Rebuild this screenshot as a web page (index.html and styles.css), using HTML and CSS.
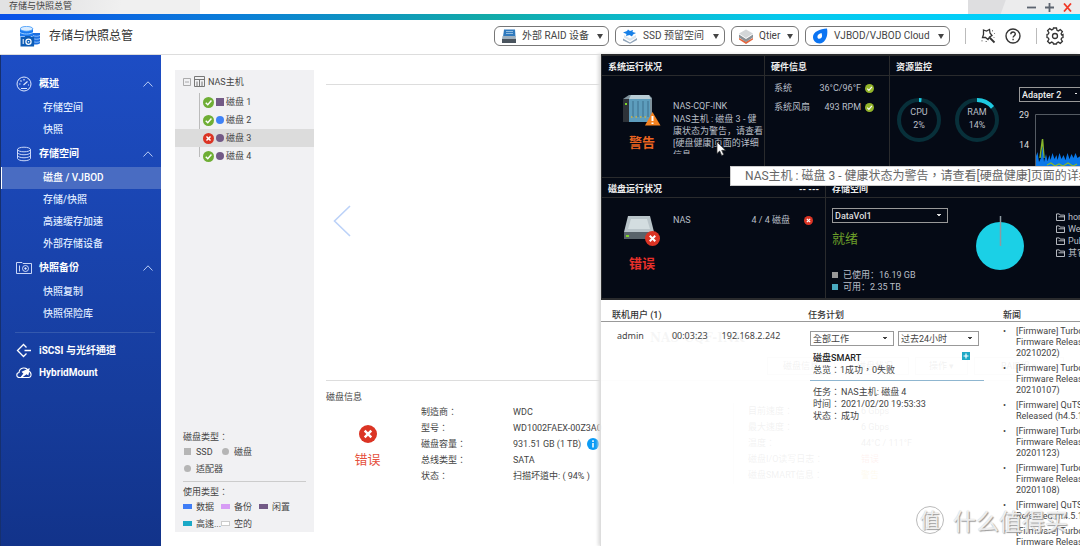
FILE: index.html
```html
<!DOCTYPE html>
<html lang="zh-Hant">
<head>
<meta charset="utf-8">
<title>存储与快照总管</title>
<link rel="stylesheet" href="styles.css">
</head>
<body>
<svg class="defs" aria-hidden="true">
  <symbol id="ok" viewBox="0 0 12 12"><circle cx="6" cy="6" r="6" fill="#6fae35"/><path d="M3 6.2 5.2 8.4 9.2 3.9" fill="none" stroke="#fff" stroke-width="1.6"/></symbol>
  <symbol id="fine" viewBox="0 0 12 12"><circle cx="6" cy="6" r="6" fill="#94b52a"/><path d="M3 6.2 5.2 8.4 9.2 3.9" fill="none" stroke="#fff" stroke-width="1.6"/></symbol>
  <symbol id="bad" viewBox="0 0 12 12"><circle cx="6" cy="6" r="6" fill="#db3424"/><path d="M3.8 3.8 8.2 8.2M8.2 3.8 3.8 8.2" stroke="#fff" stroke-width="1.6"/></symbol>
  <symbol id="up" viewBox="0 0 10 6"><path d="M.5 5.5 5 .8 9.5 5.5" fill="none" stroke="#b9cdf5" stroke-width="1"/></symbol>
  <symbol id="folder" viewBox="0 0 9 8"><path d="M.5 7.5V.9h2.8l.9 1.2h4.3v5.4zM2.5 3.8h6" fill="none" stroke="#c8ccd2" stroke-width=".9"/></symbol>
</svg>
<div class="window">
  <div class="titlebar">
    <span class="tab">存储与快照总管</span>
    <div class="winbtns">
      <button aria-label="最小化"><svg width="9" height="9" viewBox="0 0 9 9"><path d="M0 4.5h9" stroke="#5c6470" stroke-width="1.8"/></svg></button>
      <button aria-label="最大化"><svg width="9" height="9" viewBox="0 0 9 9"><path d="M0 4.5h9M4.5 0v9" stroke="#5c6470" stroke-width="1.8"/></svg></button>
      <button aria-label="关闭"><svg width="9" height="9" viewBox="0 0 9 9"><path d="M1 .5l7 8M8 .5l-7 8" stroke="#f03a28" stroke-width="1.8"/></svg></button>
    </div>
  </div>
  <div class="stripe"></div>
  <header class="header">
    <svg width="21" height="21" viewBox="0 0 21 21"><path d="M12.5 7v11c1 1 6.500.8 7.500-.8V7z" fill="#1d6fe0"/><path d="M13 9.500c2 1 5 1 7 0M13 12.500c2 1 5 1 7 0M13 15.500c2 1 5 1 7 0" stroke="#a9d4ff" fill="none" stroke-width=".8"/><path d="M0 2.500v8h13v-8z" fill="#1c7bf0"/><ellipse cx="6.500" cy="2.800" rx="6.300" ry="2.400" fill="#d9ecff" stroke="#3a95f7" stroke-width=".8"/><path d="M0 6.500c3 2 10 2 13 0" stroke="#9fd0ff" fill="none"/><path d="M.5 11h4l.8-1h5l.8 1h3v9.500H.500z" fill="#0d5cb6"/><circle cx="8.500" cy="15.700" r="2.600" fill="none" stroke="#fff" stroke-width="1.200"/><circle cx="8.500" cy="15.700" r=".8" fill="#fff"/><path d="M3.200 13v5" stroke="#fff"/></svg>
    <h1>存储与快照总管</h1>
    <div class="tools">
      <button class="pill p1"><svg width="16" height="15" viewBox="0 0 16 15"><path d="M3 .5h11L14.500 8H2z" fill="#2f79bd"/><path d="M5 2.500h7M5 4.500h7" stroke="#a9cdea" stroke-width=".8"/><path d="M1.500 7h13l.5 3H1z" fill="#9fb0be"/><path d="M1 10h14v4H1z" fill="#4a545e"/></svg><span>外部 RAID 设备</span><i></i></button>
      <button class="pill p2"><svg width="16" height="15" viewBox="0 0 16 15"><path d="M1 9.500 8 13.500 15 9v2l-7 3.800L1 11.500z" fill="#8fa3b8"/><path d="M2 6 8 9.500 14 6v2.500L8 12 2 8.500z" fill="#dbe5ee"/><path d="M1 3.500 5 2l1-1.500L8 2l3-1-.5 2L14 4l-3 1.500-1 2L7.500 6 4 7l.5-2z" fill="#1780e8"/></svg><span>SSD 预留空间</span><i></i></button>
      <button class="pill p3"><svg width="16" height="15" viewBox="0 0 16 15"><path d="M1 9 8 12.500 15 9v1.500L8 15 1 10.500z" fill="#e5673f"/><path d="M1 5.500 8 10l7-4.500v3L8 13 1 8.500z" fill="#8b9196"/><path d="M1 4.500 8 .5 15 4.500 8 9z" fill="#d3d6d8"/></svg><span>Qtier</span><i></i></button>
      <button class="pill p4"><svg width="16" height="16" viewBox="0 0 16 16"><path d="M15 .5C16.500 8 13 15.500 7.500 15.500 3.500 15.500 1 12.500 1 9 1 3.500 8 1 15 .5z" fill="#0b74f2"/><path d="M9.500 5c-3 .5-4.500 2.500-4 4.500s4 1.500 4.500-1C10.200 7.200 9.800 6 9.500 5z" fill="#fff"/></svg><span>VJBOD/VJBOD Cloud</span><i></i></button>
      <span class="vr"></span>
      <button class="ico" aria-label="查找"><svg width="16" height="16" viewBox="0 0 16 16" fill="none" stroke="#333" stroke-width="1.300"><path d="M3.500 2 6.500 3 9.500 1.500 10 5 12 7.500 9.500 9 8 11.500 5.500 9.500 2.500 9.500 3.500 6.500z"/><path d="m9.500 9.500 5 5" stroke-width="1.800"/><path d="M2 12v1.500M12.500 2v1.500M5.500 13.500h1.500M14 9v1M14 5.500h1" stroke="#888" stroke-width="1"/></svg></button>
      <button class="ico help" aria-label="帮助"><svg width="16" height="16" viewBox="0 0 16 16" fill="none" stroke="#333" stroke-width="1.400"><circle cx="8" cy="8" r="7"/><path d="M5.800 6.300c0-3 4.500-3 4.500-.3 0 1.700-2.200 1.700-2.200 3.500M8.100 10.800v1.400"/></svg></button>
      <span class="vr last"></span>
      <button class="ico" aria-label="设置"><svg width="18" height="18" viewBox="0 0 18 18" fill="none" stroke="#333" stroke-width="1.300"><path d="M7.500 1h3l.5 2.300 1.300.6 2-1.300 2.100 2.100-1.300 2 .6 1.300L17 7.500v3l-1.300.5-.6 1.300 1.300 2-2.100 2.100-2-1.300-1.300.6-.5 1.300h-3L7 15.700l-1.300-.6-2 1.300-2.100-2.100 1.300-2-.6-1.300L1 10.500v-3L2.300 7l.6-1.300-1.300-2 2.100-2.100 2 1.300L7 2.300z"/><circle cx="9" cy="9" r="2.500"/></svg></button>
    </div>
  </header>
  <div class="body">
    <nav class="side">
      <h2><svg width="16" height="16" viewBox="0 0 16 16" fill="none" stroke="#dce7ff"><circle cx="8" cy="8" r="7"/><path d="m7.500 9 4-3.500M3 8h1.500M4.500 4.500l1 1M8 3v1.500M12 9h1M5 12.500h6" stroke-width="1.200"/></svg>概述<svg class="up" width="10" height="6"><use href="#up"/></svg></h2>
      <a href="#">存储空间</a>
      <a href="#">快照</a>
      <h2><svg width="16" height="16" viewBox="0 0 16 16" fill="none" stroke="#dce7ff" stroke-width=".9"><ellipse cx="8" cy="3.500" rx="6.500" ry="2.300"/><path d="M1.500 3.500v9c1 3 12 3 13 0v-9M1.500 6.500c1 3 12 3 13 0M1.500 9.500c1 3 12 3 13 0"/></svg>存储空间<svg class="up" width="10" height="6"><use href="#up"/></svg></h2>
      <a href="#" class="on">磁盘 / VJBOD</a>
      <a href="#">存储/快照</a>
      <a href="#">高速缓存加速</a>
      <a href="#">外部存储设备</a>
      <h2><svg width="16" height="16" viewBox="0 0 16 16" fill="none" stroke="#dce7ff" stroke-width=".9"><path d="M.5 2.500H6l1 1h8.500v10H.500zM3.500 5.500v6"/><circle cx="9.500" cy="8.500" r="3"/><circle cx="9.500" cy="8.500" r=".8" fill="#fff"/></svg>快照备份<svg class="up" width="10" height="6"><use href="#up"/></svg></h2>
      <a href="#">快照复制</a>
      <a href="#">快照保险库</a>
      <hr>
      <a href="#" class="top"><svg width="16" height="16" viewBox="0 0 16 16" fill="none" stroke="#fff" stroke-width="1.300"><path d="M10.500 4.500 7.500 1.500 1.500 7.500l6 6 3-3M8.500 7.500h6.500"/></svg>iSCSI 与光纤通道</a>
      <a href="#" class="top"><svg width="16" height="16" viewBox="0 0 16 16" fill="none" stroke="#fff" stroke-width="1.100"><path d="M3.500 12.500C0 12.500 0 8 3 7.500 3.500 2 11 1.500 12 6c4 .5 4 6.500.5 6.500z"/><path d="m5 12.500 3-4-1.500-1.500L13 4l-1 5.500-1.500-1z" fill="#fff"/></svg>HybridMount</a>
    </nav>
    <main class="main">
      <section class="tree">
        <div class="root"><svg width="8" height="8" viewBox="0 0 8 8" fill="none" stroke="#999" stroke-width=".8"><path d="M.5.5h7v7h-7zM2 4h4"/></svg><svg width="11" height="11" viewBox="0 0 11 11" fill="none" stroke="#777"><path d="M.5.5h10v10H.500zM.5 3.500h10M3 5.500v5M5.500 3.500v7M8 5.500v5"/></svg>NAS主机</div>
        <ul>
          <li><svg width="11" height="11"><use href="#ok"/></svg><b class="sq"></b>磁盘 1</li>
          <li><svg width="11" height="11"><use href="#ok"/></svg><b class="blue"></b>磁盘 2</li>
          <li class="sel"><svg width="11" height="11"><use href="#bad"/></svg><b></b>磁盘 3</li>
          <li><svg width="11" height="11"><use href="#ok"/></svg><b></b>磁盘 4</li>
        </ul>
        <div class="legend">
          <p>磁盘类型：</p>
          <div class="keys"><span><i class="g"></i>SSD</span><span><i class="g r"></i>磁盘</span></div>
          <div class="keys"><span><i class="g r"></i>适配器</span></div>
          <hr>
          <p>使用类型：</p>
          <div class="keys"><span><i class="c1"></i>数据</span><span><i class="c2"></i>备份</span><span><i class="c3"></i>闲置</span></div>
          <div class="keys"><span><i class="c4"></i>高速...</span><span><i class="c5"></i>空的</span></div>
        </div>
      </section>
      <section class="detail">
        <div class="stage">
          <button class="prev" aria-label="上一个"><svg width="18" height="32" viewBox="0 0 18 32"><path d="M17 1 1.500 16 17 31" fill="none" stroke="#bcd2f8" stroke-width="1.600"/></svg></button>
          <div class="caption">NAS-CQF-INK</div>
          <div class="acts"><button>磁盘信息</button><button>磁盘状况</button><button class="narrow">操作 ▾</button><button class="wide">RAID组 ▾</button></div>
        </div>
        <h3>磁盘信息</h3>
        <div class="info">
          <div class="state"><svg width="18" height="18"><use href="#bad"/></svg>错误</div>
          <dl class="first">
            <dt>制造商：</dt><dd>WDC</dd>
            <dt>型号：</dt><dd>WD1002FAEX-00Z3A0</dd>
            <dt>磁盘容量：</dt><dd>931.51 GB (1 TB)<svg width="12" height="12" viewBox="0 0 12 12"><circle cx="6" cy="6" r="6" fill="#0a9bf5"/><path d="M6 2.300v1.700M6 5v4.500" stroke="#fff" stroke-width="1.500"/></svg></dd>
            <dt>总线类型：</dt><dd>SATA</dd>
            <dt>状态：</dt><dd>扫描坏道中: ( 94% )</dd>
          </dl>
          <dl class="second">
            <dt>目前速度：</dt><dd>6 Gbps</dd>
            <dt>最大速度：</dt><dd>6 Gbps</dd>
            <dt>温度：</dt><dd>44°C / 111°F</dd>
            <dt>磁盘I/O读写日志：</dt><dd class="red">错误</dd>
            <dt>磁盘SMART信息：</dt><dd class="amber">警告</dd>
          </dl>
        </div>
      </section>

      <aside class="dash">
        <div class="dark" lang="zh-Hans">
          <div class="row row1">
            <section class="cell">
              <h4>系统运行状况</h4>
              <div class="status">
                <div class="pic warn"><svg width="38" height="34" viewBox="0 0 38 34"><path d="M0 5 6 1h20l3 3v22l-3 2H0z" fill="#7f929c"/><path d="M0 5h6v23H0z" fill="#2d3238"/><path d="M6 5h21v23H6z" fill="#5d9dbd"/><path d="M6 5 8 1h18l2 4z" fill="#b9cdd6"/><path d="M10 7v16M15 7v16M20 7v16M25 7v16" stroke="#3d6f8d" stroke-width="1"/><path d="M8 23h18" stroke="#d3b23c" stroke-width="1.500" stroke-dasharray="1.500 3"/><path d="M2 10h2" stroke="#7fd42a" stroke-width="2"/><path d="m29.500 18 8 13.500H22z" fill="#f58220"/><path d="M29.500 22v5M29.500 28.500v1.500" stroke="#fff" stroke-width="2"/></svg>警告</div>
                <div class="msg"><p>NAS-CQF-INK</p><p class="clip">NAS主机 : 磁盘 3 - 健康状态为警告，请查看[硬盘健康]页面的详细信息</p></div>
              </div>
            </section>
            <section class="cell">
              <h4>硬件信息</h4>
              <div class="hw"><span>系统</span><span>36°C/96°F<svg width="9" height="9"><use href="#fine"/></svg></span></div>
              <div class="hw"><span>系统风扇</span><span>493 RPM<svg width="9" height="9"><use href="#fine"/></svg></span></div>
            </section>
            <section class="cell">
              <h4>资源监控</h4>
              <div class="res">
                <div class="gauge"><svg width="46" height="46" viewBox="0 0 46 46" fill="none" stroke-width="4"><circle cx="23" cy="23" r="20" stroke="#08303a"/><circle cx="23" cy="23" r="20" stroke="#1ec8e0" stroke-dasharray="2.500 126" transform="rotate(-90 23 23)"/></svg><span>CPU<br>2%</span></div>
                <div class="gauge"><svg width="46" height="46" viewBox="0 0 46 46" fill="none" stroke-width="4"><circle cx="23" cy="23" r="20" stroke="#08303a"/><circle cx="23" cy="23" r="20" stroke="#1ec8e0" stroke-dasharray="17.600 126" transform="rotate(-90 23 23)"/></svg><span>RAM<br>14%</span></div>
                <div class="net">
                  <select aria-label="网络适配器"><option>Adapter 2</option></select>
                  <div class="plot"><div class="axis"><span>29</span><span>14</span></div>
                  <svg width="64" height="60" viewBox="0 0 64 60"><path d="M.5 60V.5H64" fill="none" stroke="#555b63"/><path d="M5 44 7.500 25 9 44" fill="none" stroke="#86b52c" stroke-width="1.500"/><path d="M1 60V42l1.500-4L4 48l2-4 1.500-12L9 48l2-8 1.500 7 2-6 1 5 2-7 2 6 2-4 1 5 2-7 2 6 2-4 2 5 2-7 2 6 2-5 2 4 2-5 2 5 4-3v16z" fill="#0a78e8"/><path d="M12 51l4-2 4 3 4-2 4 2 5-3 5 3 4-2" fill="none" stroke="#86b52c" stroke-width="1.200"/></svg></div>
                </div>
              </div>
            </section>
          </div>
          <div class="row row2">
            <section class="cell">
              <h4>磁盘运行状况<span>-- ---</span></h4>
              <div class="status">
                <div class="pic err"><svg width="38" height="32" viewBox="0 0 38 32"><path d="M5 1h22l4 16H1z" fill="#b9c4c9"/><path d="M8 4h16l3 10H5z" fill="#d3dde0"/><path d="M1 17h30v7H1z" fill="#59636a"/><path d="M3 21h3" stroke="#7fd42a" stroke-width="2"/><svg x="22" y="16" width="15" height="15"><use href="#bad"/></svg></svg>错误</div>
                <div class="disks"><span>NAS</span><span>4 / 4 磁盘</span><svg width="9" height="9"><use href="#bad"/></svg></div>
              </div>
            </section>
            <section class="cell">
              <h4>存储空间</h4>
              <div class="store">
                <div class="vol">
                  <select aria-label="卷"><option>DataVol1</option></select>
                  <p class="ready">就绪</p>
                  <p class="use"><i></i>已使用：16.19 GB</p>
                  <p class="use free"><i></i>可用：2.35 TB</p>
                </div>
                <svg width="48" height="54" viewBox="0 0 48 54"><circle cx="24" cy="30" r="24" fill="#1bd0e6"/><path d="M24.500 0v30" stroke="#8d9aa0" stroke-width="1.500"/></svg>
                <ul>
                  <li><svg width="9" height="8"><use href="#folder"/></svg>home</li>
                  <li><svg width="9" height="8"><use href="#folder"/></svg>Web</li>
                  <li><svg width="9" height="8"><use href="#folder"/></svg>Public</li>
                  <li><svg width="9" height="8"><use href="#folder"/></svg>其它</li>
                </ul>
              </div>
            </section>
          </div>
        </div>
        <div class="light">
          <section class="users"><h4>联机用户 (1)</h4>
            <div class="user"><span>admin</span><span>00:03:23</span><span>192.168.2.242</span></div>
          </section>
          <section class="tasks"><h4>任务计划</h4>
            <div class="filters"><select aria-label="工作"><option>全部工作</option></select><select aria-label="时间"><option>过去24小时</option></select></div>
            <div class="sum"><div><strong>磁盘SMART</strong><p>总览：1成功，0失败</p></div><button aria-label="展开"><svg width="8" height="8" viewBox="0 0 8 8"><path d="M1.500 4h5M4 1.500v5" stroke="#fff" stroke-width="1.200"/></svg></button></div>
            <dl><dt>任务：</dt><dd>NAS主机: 磁盘 4</dd><dt>时间：</dt><dd>2021/02/20 19:53:33</dd><dt>状态：</dt><dd>成功</dd></dl>
          </section>
          <section class="news"><h4>新闻</h4>
            <ul>
              <li>[Firmware] Turbo<br>Firmware Released<br>20210202)</li>
              <li>[Firmware] Turbo<br>Firmware Released<br>20210107)</li>
              <li>[Firmware] QuTS<br>Released (h4.5.1.</li>
              <li>[Firmware] Turbo<br>Firmware Released<br>20201123)</li>
              <li>[Firmware] Turbo<br>Firmware Released<br>20201108)</li>
              <li>[Firmware] QuTS<br>Released (h4.5.1.</li>
              <li>[Firmware] Turbo<br>Firmware Released</li>
            </ul>
          </section>
        </div>
        <div class="tip" role="tooltip">NAS主机 : 磁盘 3 - 健康状态为警告，请查看[硬盘健康]页面的详细信息</div>
        <svg class="cursor" width="11" height="16" viewBox="0 0 11 16"><path d="M1 1v11.500l2.700-2.500 2 4.500 2-.9-2-4.300h3.800z" fill="#fff" stroke="#333" stroke-width=".7"/></svg>
      </aside>
    </main>
  </div>
  <div class="mark"><span>值</span>什么值得买</div>
</div>
</body>
</html>
```
FILE: styles.css
```css
* { box-sizing: border-box; margin: 0; padding: 0; }
body {
  font: 9px/12px Roboto, "Noto Sans CJK TC", sans-serif;
  color: #444;
  background: #fff;
  overflow: hidden;
}
button, select { font: inherit; color: inherit; background: none; border: 0; }
ul { list-style: none; }
a { color: inherit; text-decoration: none; }
svg { display: block; flex: none; }
.defs { position: absolute; width: 0; height: 0; }
.window { position: relative; display: flex; flex-direction: column; height: 100vh; }

.titlebar { display: flex; justify-content: space-between; height: 14px; }
.tab { width: 200px; padding-left: 9px; background: linear-gradient(100deg, #e2e2e3 40px, #f0f0f0 120px); }
.winbtns { display: flex; gap: 9px; align-items: center; justify-content: flex-end; width: 112px; padding-right: 8px; background: linear-gradient(110deg, #dedee0 35px, #ececed 36px); }
.stripe { height: 6px; flex: none; background: linear-gradient(90deg, #0a50e8, #0b7fd8 22%, #12aaa8 45%, #06c8ec 72%, #00d2ff); }

.header { display: flex; align-items: center; gap: 8px; height: 35px; flex: none; padding: 0 16px 2px 20px; border-bottom: 1px solid #ddd; }
h1 { font-size: 12px; font-weight: 400; color: #333; white-space: nowrap; }
.tools { display: flex; align-items: center; gap: 6px; margin-left: auto; }
.pill { display: flex; align-items: center; gap: 5px; height: 20px; padding: 0 5px 0 6px; border: 1px solid #777; border-radius: 6px; font-size: 10px; color: #444; white-space: nowrap; }
.p4 { gap: 6px; }
.pill i { margin-left: auto; border: 3px solid transparent; border-top: 5px solid #444; border-bottom: 0; }
.p1 { width: 115px; } .p2 { width: 110px; } .p3 { width: 68px; } .p4 { width: 145px; }
.vr { width: 1px; height: 16px; margin: 0 8px 0 9px; background: #bbb; }
.vr.last { margin-right: 3px; }
.ico.help { margin-left: 3px; }

.body { display: flex; flex: 1; min-height: 0; }
.side { width: 161px; flex: none; padding-top: 16px; color: #fff; background: linear-gradient(#1d4dc4, #163c9c 70%, #12338a); border-left: 1px solid #16306f; }
.side h2 { display: flex; align-items: center; gap: 7px; height: 26px; padding: 0 8px 0 15px; font-size: 10px; }
.side .up { margin-left: auto; }
.side a { display: flex; align-items: center; height: 22px; padding-left: 42px; font-size: 10px; font-weight: 500; color: #dfe9ff; }
.side a.on { padding-left: 41px; border-left: 1px solid #fff; background: #496cc2; color: #fff; }
.side a.top { gap: 7px; padding-left: 15px; font-weight: 700; color: #fff; }
.side hr { margin: 7px 6px 7px 14px; border: 0; border-top: 1px solid #3459ae; }

.main { position: relative; display: flex; flex: 1; min-width: 0; padding: 15px 0 14px 14px; }
.tree { display: flex; flex-direction: column; width: 139px; flex: none; background: #f1f1f3; }
.root { display: flex; align-items: center; gap: 3px; height: 23px; padding-left: 8px; }
.tree ul { background: linear-gradient(#bbb, #bbb) 24px 0 / 1px 64px no-repeat; }
.tree li { display: flex; align-items: center; gap: 2px; height: 18px; padding-left: 28px; }
.tree li.sel { background: #dcdcdc; }
.tree b { width: 8px; height: 8px; border-radius: 4px; background: #735a86; }
.tree b.sq { border-radius: 0; } .tree b.blue { background: #3f82f7; }
.legend { margin-top: auto; padding: 0 8px; }
.keys { display: flex; height: 17px; align-items: center; }
.keys span { display: flex; align-items: center; gap: 4px; width: 38px; white-space: nowrap; }
.keys i { width: 9px; height: 5px; flex: none; background: #3f7df6; }
.keys i.g { width: 7px; height: 7px; margin: 0 1px; background: #b5b5b5; }
.keys i.r { border-radius: 4px; }
.keys i.c2 { background: #d79cf5; } .keys i.c3 { background: #735a86; } .keys i.c4 { background: #1ba9c7; }
.keys i.c5 { background: #fff; border: 1px solid #ccc; }
.legend hr { margin: 4px 0; border: 0; border-top: 1px solid #ccc; }

.detail { flex: 1; min-width: 0; padding: 14px 0 0 12px; }
.stage { position: relative; display: flex; flex-direction: column; justify-content: flex-end; height: 297px; padding: 0 16px 5px 0; border: solid #ddd; border-width: 1px 0; }
.prev { position: absolute; left: 7px; top: 120px; }
.caption { margin: 0 0 10px 324px; font: bold 12px/18px "DejaVu Serif", serif; color: #777; }
.acts { display: flex; justify-content: flex-end; gap: 6px; }
.acts button { width: 68px; height: 18px; border: 1px solid #ccc; }
.acts .narrow { width: 53px; } .acts .wide { width: 90px; }
.detail h3 { margin-top: 10px; font-size: 9px; font-weight: 400; }
.info { display: flex; line-height: 16px; white-space: nowrap; }
.state { display: flex; flex-direction: column; flex: none; align-items: center; gap: 9px; width: 83px; padding-top: 22px; font-size: 13px; color: #e5503c; }
.info dl { display: grid; flex: none; align-content: start; }
.first { grid-template-columns: 92px 100px; margin: 1px 120px 0 12px; }
.second { grid-template-columns: 113px 100px; padding-left: 14px; border-left: 1px solid #ddd; }
.info dd { display: flex; align-items: center; gap: 6px; }
.info .red { color: #e5503c; } .info .amber { color: #e8b020; }

.dash { position: absolute; left: 439px; right: 0; top: -1px; bottom: 0; display: flex; flex-direction: column; overflow: hidden; border-left: 1px solid #ddd; font-family: Roboto, "Noto Sans CJK SC", sans-serif; box-shadow: -2px 0 3px #ddd; }
.dark { color: #b9bfc7; background: #050a15; border: solid #2a2b2d; border-width: 2px 0 2px 1px; }
.row { display: grid; }
.row1 { grid-template-columns: 163px 125px 1fr; height: 121px; }
.row2 { grid-template-columns: 224px 1fr; height: 121px; border-top: 1px solid #2a2b2d; }
.cell { min-width: 0; overflow: hidden; border-right: 1px solid #2a2b2d; white-space: nowrap; }
.cell:last-child { border-right: 0; }
.cell h4 { display: flex; justify-content: space-between; height: 20px; padding: 5px 6px 0; font-size: 9px; color: #eee; border-bottom: 1px solid #2a2b2d; }
.status { display: flex; }
.pic { display: flex; flex-direction: column; align-items: center; gap: 8px; width: 38px; margin: 18px 12px 0 21px; font-size: 13px; font-weight: 700; line-height: 14px; }
.warn { color: #ec6420; } .err { gap: 10px; margin-top: 17px; color: #e8302a; }
.pic svg { align-self: flex-start; }
.msg { width: 92px; padding-top: 24px; }
.clip { height: 41px; margin-top: 1px; overflow: hidden; white-space: normal; line-height: 12px; width: 91px; }
.hw { display: flex; justify-content: space-between; height: 19px; align-items: center; padding: 5px 15px 0 9px; }
.hw span { display: flex; gap: 4px; align-items: center; }
.res { display: flex; padding: 11px 0 0 6px; }
.gauge { position: relative; flex: none; width: 46px; margin: 10px 12px 0 0; }
.gauge span { position: absolute; inset: 9px 0 0; text-align: center; line-height: 13px; }
.net { margin-left: 7px; color: #ddd; }
select { appearance: none; border: 1px solid #999; background: linear-gradient(45deg, transparent 50%, currentColor 50%) calc(100% - 8px) 5px / 2px 2px no-repeat, linear-gradient(-45deg, transparent 50%, currentColor 50%) calc(100% - 6px) 5px / 2px 2px no-repeat; height: 15px; padding: 0 2px; line-height: 12px; }
.net select { width: 66px; font-weight: 500; color: #eee; }
.plot { display: flex; padding-top: 12px; gap: 6px; }
.axis { display: flex; flex-direction: column; gap: 18px; margin-top: -5px; }
.disks { display: flex; flex: 1; align-items: center; height: 12px; margin-top: 16px; padding-right: 12px; gap: 14px; }
.disks span:first-child { margin-right: auto; }
.store { display: flex; padding: 10px 0 0 6px; align-items: flex-start; }
.store > * { flex: none; }
.vol { width: 116px; margin-right: 28px; }
.vol select { display: block; width: 100%; font-weight: 500; color: #ddd; }
.ready { margin: 8px 0 22px; font-size: 13px; line-height: 16px; color: #6b9e29; }
.use { display: flex; align-items: center; gap: 5px; }
.use i { width: 6px; height: 6px; background: #999; } .use.free i { background: #49aac0; }
.store > svg { margin-top: 8px; }
.store ul { margin: 3px 0 0 32px; }
.store li { display: flex; align-items: center; gap: 3px; height: 12px; }

.light { flex: 1; display: grid; grid-template-columns: 200px 195px 1fr; min-height: 0; padding-top: 1px; background: rgb(255 255 255 / 93%); white-space: nowrap; font-family: Roboto, "Noto Sans CJK TC", sans-serif; }
.light h4 { height: 21px; padding: 8px 0 0 7px; border-bottom: 1px solid #999; font-size: 9px; font-weight: 500; color: #333; }
.light .users h4 { padding-left: 11px; }
.user { display: flex; gap: 28px; padding: 8px 0 0 16px; font-family: "Noto Sans", sans-serif; }
.user span:last-child { margin-left: -14px; }
.filters { display: flex; gap: 4px; padding: 9px 0 0 9px; }
.filters select { width: 84px; } .filters select + select { width: 81px; }
.sum { display: flex; justify-content: space-between; align-items: flex-start; margin: 6px 12px 0 9px; padding: 0 14px 4px 3px; border-bottom: 1px solid #8fb6d0; }
.sum strong { font-weight: 500; color: #222; }
.sum button { width: 8px; height: 8px; background: #1fa9c6; }
.tasks dl { display: grid; grid-template-columns: 28px 1fr; margin: 5px 0 0 12px; }
.news ul { padding: 4px 0 0 7px; line-height: 11px; }
.news li { position: relative; padding-left: 13px; margin-bottom: 4px; }
.news li::before { content: "•"; position: absolute; left: 0; }

.tip { position: absolute; left: 129px; top: 112px; height: 20px; padding: 0 14px; font: 12px/18px Roboto, "Noto Sans CJK TC", sans-serif; color: #666; background: #fff; border: 1px solid #ccc; white-space: nowrap; }
.cursor { position: absolute; left: 115px; top: 87px; }
.mark { position: absolute; right: 12px; bottom: 12px; display: flex; align-items: center; gap: 9px; font: 23px/28px "Noto Sans CJK SC", sans-serif; color: rgb(255 255 255 / 80%); text-shadow: 1px 1px 1px #999, 0 0 1px #bbb; white-space: nowrap; }
.mark span { width: 28px; height: 28px; font-size: 20px; line-height: 25px; text-align: center; border: 1px solid #bbb; border-radius: 14px; }
```
